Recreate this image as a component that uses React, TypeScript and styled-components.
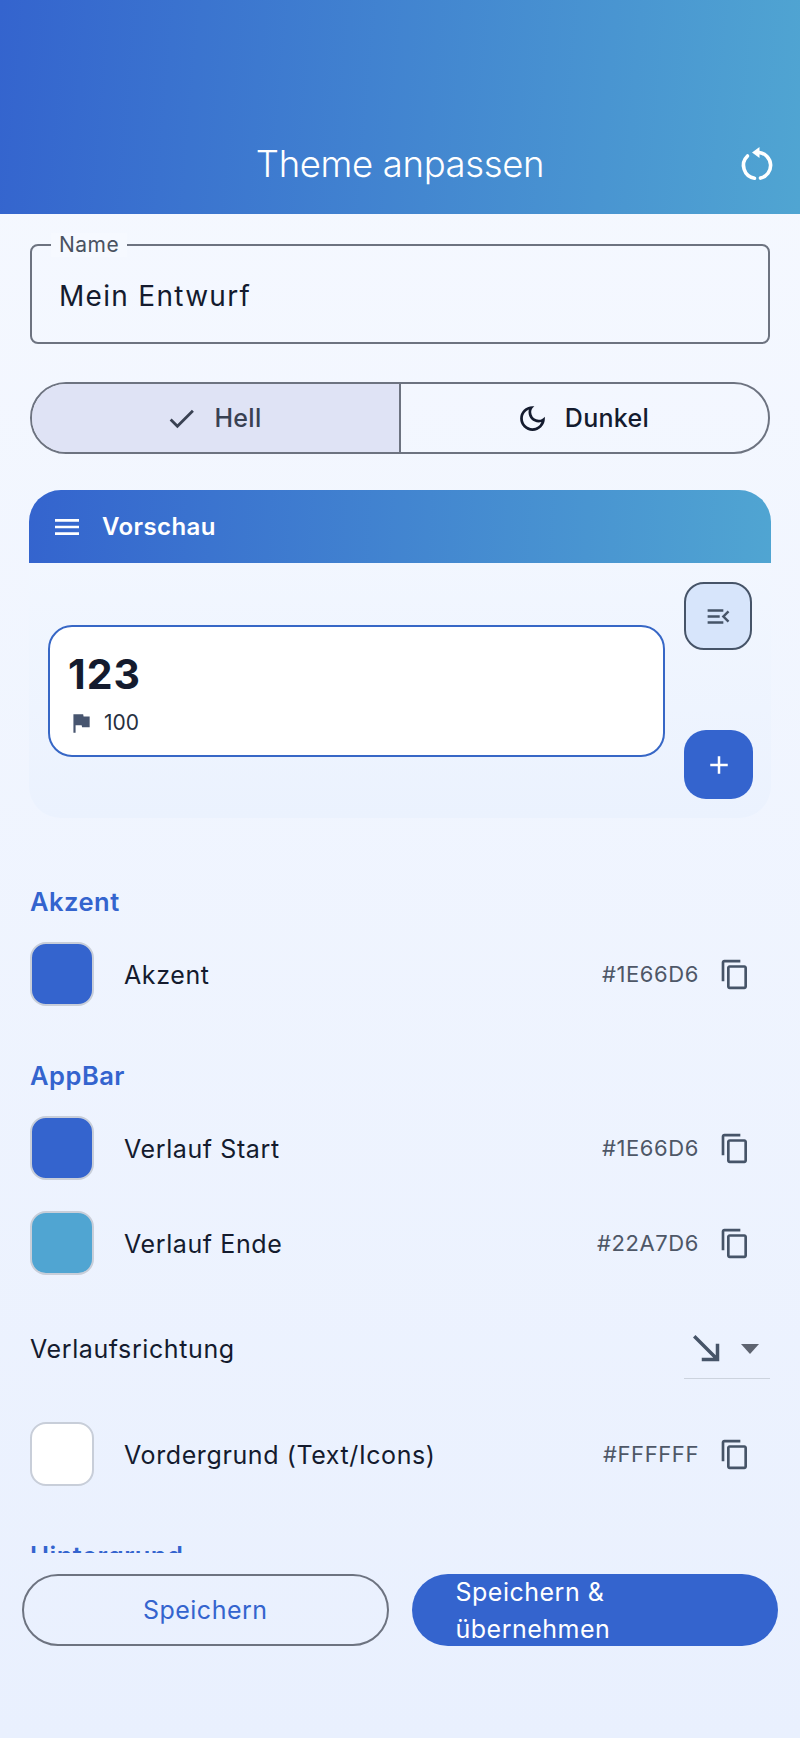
import React from "react";
import styled, { createGlobalStyle } from "styled-components";
import {
  MdCheck,
  MdOutlineDarkMode,
  MdMenu,
  MdMenuOpen,
  MdFlag,
  MdAdd,
  MdOutlineContentCopy,
  MdSouthEast,
} from "react-icons/md";

const Global = createGlobalStyle`
  html, body { margin: 0; padding: 0; }
  body { font-family: Inter, "Liberation Sans", sans-serif; background: #f0f4ff; }
  * { box-sizing: border-box; }
`;

const Screen = styled.div`
  width: 800px;
  height: 1738px;
  display: flex;
  flex-direction: column;
  overflow: hidden;
  background: linear-gradient(180deg, #f6f9ff 0%, #e9f0fe 100%);
  color: #141b2e;
`;

const Header = styled.header`
  height: 214px;
  flex: none;
  display: flex;
  align-items: flex-end;
  justify-content: center;
  position: relative;
  padding-bottom: 27px;
  background: linear-gradient(95deg, #3464ce 0%, #50a5d2 100%);
`;

const Title = styled.h1`
  margin: 0;
  font-size: 36.5px;
  line-height: 46px;
  font-weight: 300;
  color: #fff;
  letter-spacing: -0.35px;
`;

const ResetIcon = styled.svg`
  position: absolute;
  right: 24px;
  bottom: 29px;
  width: 38px;
  height: 42px;
`;

const Scroll = styled.main`
  flex: 1;
  min-height: 0;
  overflow: hidden;
  padding: 30px 30px 0;
`;

const Field = styled.div`
  position: relative;
  height: 100px;
  border: 2px solid #6d7380;
  border-radius: 8px;
  display: flex;
  align-items: center;
  padding: 4px 27px 0;
`;

const FieldLabel = styled.span`
  position: absolute;
  top: -13px;
  left: 19px;
  padding: 0 8px;
  background: #f6f9ff;
  font-size: 21px;
  line-height: 24px;
  color: #4a5261;
  letter-spacing: 0.5px;
`;

const FieldValue = styled.span`
  font-size: 28px;
  letter-spacing: 1.3px;
  color: #141b2e;
`;

const Segments = styled.div`
  margin-top: 38px;
  height: 72px;
  display: flex;
  border: 2px solid #6d7380;
  border-radius: 36px;
  overflow: hidden;
`;

const Segment = styled.div<{ $active?: boolean }>`
  flex: 1;
  display: flex;
  align-items: center;
  justify-content: center;
  gap: 16px;
  padding-right: 4px;
  font-size: 25px;
  font-weight: 500;
  letter-spacing: 0.3px;
  background: ${(p) => (p.$active ? "#dfe3f5" : "transparent")};
  color: ${(p) => (p.$active ? "#394152" : "#141b2e")};
  & + & {
    border-left: 2px solid #6d7380;
  }
  svg {
    font-size: 33px;
    flex: none;
  }
`;

const Preview = styled.section`
  margin: 36px -1px 0;
  border-radius: 32px;
  overflow: hidden;
  background: linear-gradient(180deg, #f4f8ff 0%, #ebf2fe 100%);
`;

const PreviewBar = styled.div`
  height: 73px;
  display: flex;
  align-items: center;
  gap: 19px;
  padding: 0 22px;
  color: #fff;
  background: linear-gradient(93deg, #3464ce 0%, #50a5d2 100%);
  svg {
    font-size: 32px;
  }
`;

const PreviewTitle = styled.span`
  font-size: 24px;
  font-weight: 600;
  letter-spacing: 0.4px;
`;

const PreviewBody = styled.div`
  height: 255px;
  display: flex;
  align-items: center;
  gap: 19px;
  padding: 19px 18px 19px 19px;
`;

const Card = styled.div`
  flex: 1;
  height: 132px;
  background: #fff;
  border: 2px solid #3767c6;
  border-radius: 24px;
  padding: 24px 18px;
`;

const CardValue = styled.div`
  font-size: 41px;
  line-height: 46px;
  font-weight: 700;
  letter-spacing: 1px;
  color: #141b2e;
`;

const CardMeta = styled.div`
  margin-top: 13px;
  display: flex;
  align-items: center;
  gap: 10px;
  font-size: 21px;
  line-height: 26px;
  color: #27303f;
  svg {
    font-size: 26px;
    color: #47556f;
  }
`;

const SideColumn = styled.div`
  align-self: stretch;
  width: 69px;
  display: flex;
  flex-direction: column;
  justify-content: space-between;
`;

const RailToggle = styled.div`
  width: 68px;
  height: 68px;
  display: flex;
  align-items: center;
  justify-content: center;
  background: #d7e5fb;
  border: 2px solid #465468;
  border-radius: 20px;
  color: #465468;
  font-size: 29px;
`;

const Fab = styled.div`
  width: 69px;
  height: 69px;
  display: flex;
  align-items: center;
  justify-content: center;
  background: #3464ce;
  border-radius: 22px;
  color: #fff;
  font-size: 30px;
`;

const SectionTitle = styled.h2<{ $first?: boolean }>`
  margin: ${(p) => (p.$first ? "68px" : "54px")} 0 24px;
  font-size: 25.5px;
  line-height: 32px;
  font-weight: 600;
  letter-spacing: 0.5px;
  color: #3464ce;
`;

const ColorRow = styled.div`
  height: 64px;
  display: flex;
  align-items: center;
  & + & {
    margin-top: 31px;
  }
`;

const Swatch = styled.div<{ $color: string }>`
  width: 64px;
  height: 64px;
  flex: none;
  border-radius: 16px;
  background: ${(p) => p.$color};
  border: 2px solid #c8ced9;
`;

const RowLabel = styled.span`
  margin-left: 30px;
  padding-top: 2px;
  flex: 1;
  font-size: 25px;
  letter-spacing: 0.6px;
  color: #141b2e;
`;

const Hex = styled.span`
  font-size: 22px;
  letter-spacing: 0.6px;
  color: #4e5767;
`;

const CopyButton = styled.div`
  width: 32px;
  margin: 0 19px 0 20px;
  display: flex;
  color: #465468;
  font-size: 33px;
`;

const SelectRow = styled.div`
  margin: 44px 0 43px;
  height: 60px;
  display: flex;
  align-items: center;
  justify-content: space-between;
`;

const SelectLabel = styled.span`
  font-size: 25px;
  letter-spacing: 0.6px;
  color: #141b2e;
`;

const Select = styled.div`
  width: 86px;
  height: 60px;
  display: flex;
  align-items: center;
  justify-content: space-between;
  border-bottom: 1px solid #ccd3de;
  padding: 0 11px 0 2px;
  color: #465468;
  svg {
    font-size: 42px;
  }
`;

const Caret = styled.span`
  width: 0;
  height: 0;
  border-left: 9px solid transparent;
  border-right: 9px solid transparent;
  border-top: 10px solid #5e6470;
`;

const Footer = styled.footer`
  flex: none;
  height: 185px;
  display: grid;
  grid-template-columns: 1fr 1fr;
  align-items: start;
  gap: 23px;
  padding: 21px 22px 0;
`;

const ActionButton = styled.button<{ $primary?: boolean }>`
  height: 72px;
  border-radius: 36px;
  font-family: inherit;
  font-size: 25px;
  line-height: 36.5px;
  font-weight: 400;
  letter-spacing: 0.5px;
  text-align: ${(p) => (p.$primary ? "left" : "center")};
  padding: 0 44px;
  background: ${(p) => (p.$primary ? "#3464ce" : "transparent")};
  color: ${(p) => (p.$primary ? "#fff" : "#3464ce")};
  border: ${(p) => (p.$primary ? "0" : "2px solid #6d7380")};
`;

const rows1 = [{ label: "Akzent", hex: "#1E66D6", color: "#3464ce" }];
const rows2 = [
  { label: "Verlauf Start", hex: "#1E66D6", color: "#3464ce" },
  { label: "Verlauf Ende", hex: "#22A7D6", color: "#50a5d2" },
];

function Row({ label, hex, color }: { label: string; hex: string; color: string }) {
  return (
    <ColorRow>
      <Swatch $color={color} />
      <RowLabel>{label}</RowLabel>
      <Hex>{hex}</Hex>
      <CopyButton>
        <MdOutlineContentCopy />
      </CopyButton>
    </ColorRow>
  );
}

export default function App() {
  return (
    <Screen>
      <Global />
      <Header>
        <Title>Theme anpassen</Title>
        <ResetIcon viewBox="0 0 38 42" fill="none">
          <path d="M21 9.5a13 13 0 0 1 1.5 25.6" stroke="#fff" strokeWidth="3.6" strokeLinecap="round" />
          <path d="M16.5 35.2A13 13 0 0 1 9.5 13" stroke="#fff" strokeWidth="3.6" strokeLinecap="round" />
          <path d="M14 9.5 21.5 4v11z" fill="#fff" />
        </ResetIcon>
      </Header>
      <Scroll>
        <Field>
          <FieldLabel>Name</FieldLabel>
          <FieldValue>Mein Entwurf</FieldValue>
        </Field>
        <Segments>
          <Segment $active>
            <MdCheck />
            Hell
          </Segment>
          <Segment>
            <MdOutlineDarkMode />
            Dunkel
          </Segment>
        </Segments>
        <Preview>
          <PreviewBar>
            <MdMenu />
            <PreviewTitle>Vorschau</PreviewTitle>
          </PreviewBar>
          <PreviewBody>
            <Card>
              <CardValue>123</CardValue>
              <CardMeta>
                <MdFlag />
                100
              </CardMeta>
            </Card>
            <SideColumn>
              <RailToggle>
                <MdMenuOpen />
              </RailToggle>
              <Fab>
                <MdAdd />
              </Fab>
            </SideColumn>
          </PreviewBody>
        </Preview>
        <SectionTitle $first>Akzent</SectionTitle>
        {rows1.map((r) => (
          <Row key={r.label} {...r} />
        ))}
        <SectionTitle>AppBar</SectionTitle>
        {rows2.map((r) => (
          <Row key={r.label} {...r} />
        ))}
        <SelectRow>
          <SelectLabel>Verlaufsrichtung</SelectLabel>
          <Select>
            <MdSouthEast />
            <Caret />
          </Select>
        </SelectRow>
        <Row label="Vordergrund (Text/Icons)" hex="#FFFFFF" color="#ffffff" />
        <SectionTitle>Hintergrund</SectionTitle>
      </Scroll>
      <Footer>
        <ActionButton>Speichern</ActionButton>
        <ActionButton $primary>Speichern &amp; übernehmen</ActionButton>
      </Footer>
    </Screen>
  );
}
